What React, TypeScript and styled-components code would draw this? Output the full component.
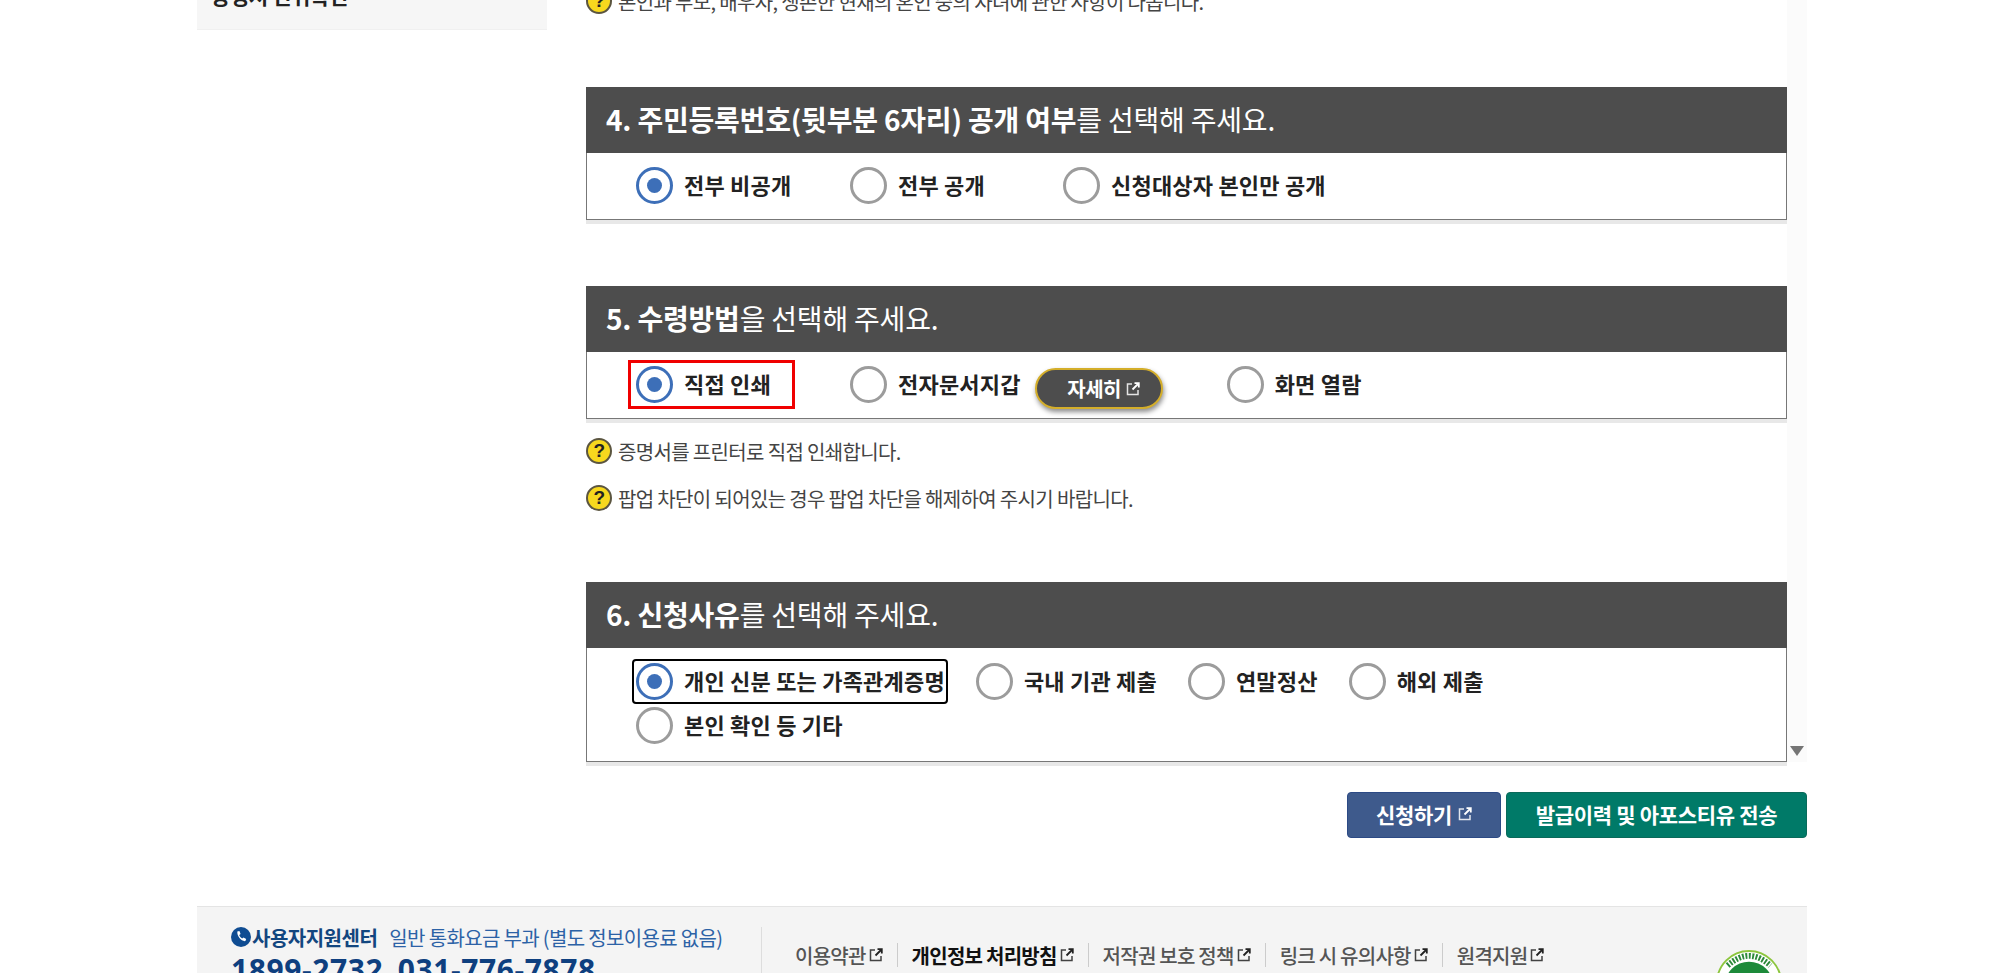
import React from "react";
import styled, { createGlobalStyle } from "styled-components";

const GlobalStyle = createGlobalStyle`
  html, body {
    margin: 0;
    padding: 0;
    height: 973px;
    overflow: hidden;
    background: #fff;
    font-family: "Noto Sans CJK KR", "Noto Sans", sans-serif;
  }
`;

const Page = styled.div`
  width: 1610px;
  margin: -30px 0 0 197px;
`;

const Main = styled.div`
  display: flex;
  gap: 39px;
`;

const Sidebar = styled.aside`
  width: 350px;
  flex: none;
`;

const SideItem = styled.div`
  height: 60px;
  box-sizing: border-box;
  padding: 11px 14px 0;
  background: #f6f6f6;
  border-bottom: 1px solid #f0f0f0;
  font-size: 21px;
  font-weight: 700;
  line-height: 28px;
  letter-spacing: -0.4px;
  color: #222;
`;

const Content = styled.main`
  width: 1221px;
  flex: none;
`;

const ScrollArea = styled.div`
  display: flex;
`;

const Sections = styled.div`
  width: 1201px;
  flex: none;
`;

const Gutter = styled.div`
  width: 20px;
  display: flex;
  align-items: flex-end;
  justify-content: center;
  padding-bottom: 6px;
  box-sizing: border-box;
  background: #fbfbfb;
`;

const ArrowDown = styled.span`
  width: 0;
  height: 0;
  border-left: 7px solid transparent;
  border-right: 7px solid transparent;
  border-top: 10px solid #757575;
`;

const Notes = styled.div<{ $top?: number }>`
  display: flex;
  flex-direction: column;
  gap: 19px;
  padding-top: ${(p) => p.$top ?? 0}px;
`;

const Note = styled.p`
  display: flex;
  align-items: center;
  gap: 6px;
  height: 28px;
  margin: 0;
  font-size: 20px;
  letter-spacing: -0.65px;
  color: #444;
  white-space: nowrap;
`;

const Hint = styled.span`
  width: 26px;
  height: 26px;
  flex: none;
  box-sizing: border-box;
  border-radius: 50%;
  background: #f7d81e;
  border: 2px solid #5b5540;
  display: flex;
  align-items: center;
  justify-content: center;
  font-family: "Liberation Sans", sans-serif;
  font-size: 19px;
  font-weight: 700;
  color: #222;
`;

const Section = styled.section<{ $top: number }>`
  margin-top: ${(p) => p.$top}px;
  box-shadow: 0 4px 0 #e8e8e8;
`;

const Heading = styled.h2`
  height: 66px;
  box-sizing: border-box;
  margin: 0;
  padding: 0 0 3px 20px;
  display: flex;
  align-items: center;
  white-space: pre;
  background: #4d4d4d;
  color: #fff;
  font-size: 28px;
  font-weight: 400;
  letter-spacing: -0.2px;
  strong {
    font-weight: 700;
  }
`;

const Options = styled.div<{ $tall?: boolean }>`
  box-sizing: border-box;
  height: ${(p) => (p.$tall ? 114 : 67)}px;
  padding: ${(p) => (p.$tall ? "12px 0 0 49px" : "11px 0 0 49px")};
  border: 1px solid #777;
  border-top: none;
  display: flex;
  flex-wrap: wrap;
  align-content: flex-start;
  row-gap: 1px;
  background: #fff;
`;

const Option = styled.label<{ $width?: number; $gap?: number }>`
  display: flex;
  align-items: center;
  gap: 11px;
  height: 43px;
  width: ${(p) => (p.$width ? `${p.$width}px` : "auto")};
  margin-right: ${(p) => p.$gap ?? 0}px;
  font-size: 22px;
  font-weight: 700;
  letter-spacing: 0.2px;
  color: #222;
  white-space: nowrap;
`;

const OptionText = styled.span`
  margin-bottom: 3px;
`;

const Radio = styled.span<{ $checked?: boolean }>`
  width: 37px;
  height: 37px;
  flex: none;
  box-sizing: border-box;
  border-radius: 50%;
  border: 3px solid ${(p) => (p.$checked ? "#3d6fb8" : "#9c9c9c")};
  display: flex;
  align-items: center;
  justify-content: center;
  background: #fff;
  &::after {
    content: "";
    display: ${(p) => (p.$checked ? "block" : "none")};
    width: 15px;
    height: 15px;
    border-radius: 50%;
    background: #3d6fb8;
  }
`;

const RedMark = styled.span`
  display: flex;
  align-items: center;
  gap: 11px;
  flex: none;
  height: 49px;
  box-sizing: border-box;
  margin-left: -8px;
  padding: 0 21px 0 5px;
  border: 3px solid #f00000;
`;

const FocusMark = styled.span`
  display: flex;
  align-items: center;
  gap: 11px;
  flex: none;
  height: 45px;
  box-sizing: border-box;
  margin-left: -4px;
  padding: 0 1px 0 2px;
  border: 2px solid #000;
  border-radius: 4px;
`;

const DetailButton = styled.button`
  display: flex;
  align-items: center;
  justify-content: center;
  gap: 5px;
  width: 128px;
  height: 41px;
  margin: 5px 64px 0 14px;
  padding: 0 0 0 10px;
  border: 2px solid #d4ae2a;
  border-radius: 21px;
  background: #4d4d4d;
  box-shadow: 1px 3px 5px rgba(0, 0, 0, 0.45);
  color: #fff;
  font-family: inherit;
  font-size: 20px;
  font-weight: 700;
  letter-spacing: -0.5px;
`;

const Actions = styled.div`
  display: flex;
  justify-content: flex-end;
  gap: 5px;
  margin-top: 30px;
`;

const ActionButton = styled.button<{ $bg: string; $line: string; $width: number }>`
  display: flex;
  align-items: center;
  justify-content: center;
  gap: 6px;
  width: ${(p) => p.$width}px;
  height: 46px;
  padding: 0 0 3px;
  border: 1px solid ${(p) => p.$line};
  border-radius: 4px;
  background: ${(p) => p.$bg};
  color: #fff;
  font-family: inherit;
  font-size: 21px;
  font-weight: 700;
  letter-spacing: -0.3px;
`;

const Footer = styled.footer`
  display: flex;
  height: 200px;
  margin-top: 68px;
  padding: 17px 0 0 34px;
  box-sizing: border-box;
  background: #f4f4f4;
  border-top: 1px solid #e4e4e4;
`;

const Support = styled.div`
  width: 530px;
  flex: none;
`;

const SupportRow = styled.div`
  display: flex;
  align-items: center;
  height: 26px;
  white-space: nowrap;
`;

const SupportTitle = styled.strong`
  margin: 0 12px 0 1px;
  font-size: 20px;
  letter-spacing: -0.5px;
  color: #12467f;
`;

const SupportInfo = styled.span`
  font-size: 20px;
  letter-spacing: -0.65px;
  color: #2c62a6;
`;

const Phones = styled.div`
  margin-top: 1px;
  font-family: "Noto Sans", sans-serif;
  font-size: 30px;
  line-height: 38px;
  font-weight: 700;
  letter-spacing: 0.6px;
  word-spacing: 6px;
  color: #0e3f7f;
`;

const FooterLinks = styled.nav`
  display: flex;
  align-items: flex-start;
  width: 920px;
  flex: none;
  margin-top: 3px;
  padding: 16px 0 0 33px;
  border-left: 1px solid #ddd;
  height: 60px;
  box-sizing: border-box;
`;

const FooterLink = styled.a<{ $strong?: boolean; $last?: boolean }>`
  display: flex;
  align-items: center;
  gap: 3px;
  height: 24px;
  padding-right: 14px;
  margin-right: 14px;
  border-right: ${(p) => (p.$last ? "none" : "1px solid #ccc")};
  font-size: 20px;
  font-weight: ${(p) => (p.$strong ? 700 : 500)};
  letter-spacing: -0.75px;
  color: ${(p) => (p.$strong ? "#111" : "#555")};
  white-space: nowrap;
`;

const Badge = styled.div`
  flex: none;
  margin: 25px 0 0 34px;
`;

const ExternalIcon = ({ color = "#fff", size = 14 }: { color?: string; size?: number }) => (
  <svg width={size} height={size} viewBox="0 0 14 14" fill="none">
    <path d="M6 2H1.5v10.5H12V8" stroke={color} strokeWidth="1.5" opacity="0.85" />
    <path d="M6.5 7.500 12.500 1.500M8.500 1.200h4.300v4.300" stroke={color} strokeWidth="1.8" />
  </svg>
);

const PhoneIcon = () => (
  <svg width="20" height="20" viewBox="0 0 20 20">
    <circle cx="10" cy="10" r="10" fill="#0f4c92" />
    <path
      d="M6.300 4.600 8.400 4l1.200 3-1.400 1c.5 1.500 1.500 2.700 3 3.500l1.300-1.100 2.700 1.600-.8 2.100c-3.900.5-8.500-4.700-8.100-9.500z"
      fill="#fff"
    />
  </svg>
);

const WaBadge = () => (
  <svg width="68" height="68" viewBox="0 0 70 70">
    <circle cx="35" cy="35" r="33" fill="#fff" stroke="#8dc63f" strokeWidth="2" />
    <path d="M13 17 Q35 -3 57 17" fill="none" stroke="#2d8a3a" strokeWidth="6" strokeDasharray="2 1.500" />
    <circle cx="35" cy="38" r="25" fill="#1d8a3a" />
    <text x="10" y="47" fontFamily="Liberation Sans" fontSize="25" fontWeight="700" fontStyle="italic" fill="#fff">
      WA
    </text>
    <circle cx="49" cy="37" r="10" fill="#e8f2c8" />
  </svg>
);

type Item = { label: string; checked?: boolean; width?: number; gap?: number };

const Choice = ({ label, checked, width, gap }: Item) => (
  <Option $width={width} $gap={gap}>
    <Radio $checked={checked} />
    <OptionText>{label}</OptionText>
  </Option>
);

export default function App() {
  return (
    <Page>
      <GlobalStyle />
      <Main>
        <Sidebar>
          <SideItem>증명서 진위확인</SideItem>
        </Sidebar>
        <Content>
          <ScrollArea>
            <Sections>
              <Notes $top={17}>
                <Note>
                  <Hint>?</Hint>본인과 부모, 배우자, 생존한 현재의 혼인 중의 자녀에 관한 사항이 나옵니다.
                </Note>
              </Notes>
              <Section $top={72}>
                <Heading>
                  <strong>4. 주민등록번호(뒷부분 6자리) 공개 여부</strong>를 선택해 주세요.
                </Heading>
                <Options>
                  <Choice label="전부 비공개" checked width={214} />
                  <Choice label="전부 공개" width={213} />
                  <Choice label="신청대상자 본인만 공개" />
                </Options>
              </Section>
              <Section $top={66}>
                <Heading>
                  <strong>5. 수령방법</strong>을 선택해 주세요.
                </Heading>
                <Options>
                  <Option $width={214}>
                    <RedMark>
                      <Radio $checked />
                      <OptionText>직접 인쇄</OptionText>
                    </RedMark>
                  </Option>
                  <Choice label="전자문서지갑" />
                  <DetailButton>
                    자세히
                    <ExternalIcon />
                  </DetailButton>
                  <Choice label="화면 열람" />
                </Options>
              </Section>
              <Notes $top={18}>
                <Note>
                  <Hint>?</Hint>증명서를 프린터로 직접 인쇄합니다.
                </Note>
                <Note>
                  <Hint>?</Hint>팝업 차단이 되어있는 경우 팝업 차단을 해제하여 주시기 바랍니다.
                </Note>
              </Notes>
              <Section $top={70}>
                <Heading>
                  <strong>6. 신청사유</strong>를 선택해 주세요.
                </Heading>
                <Options $tall>
                  <Option $gap={28}>
                    <FocusMark>
                      <Radio $checked />
                      <OptionText>개인 신분 또는 가족관계증명</OptionText>
                    </FocusMark>
                  </Option>
                  <Choice label="국내 기관 제출" gap={31} />
                  <Choice label="연말정산" gap={31} />
                  <Choice label="해외 제출" gap={200} />
                  <Choice label="본인 확인 등 기타" />
                </Options>
              </Section>
            </Sections>
            <Gutter>
              <ArrowDown />
            </Gutter>
          </ScrollArea>
          <Actions>
            <ActionButton $bg="#3e5a8c" $line="#2c4a85" $width={154}>
              신청하기
              <ExternalIcon />
            </ActionButton>
            <ActionButton $bg="#007a68" $line="#0a6a5a" $width={301}>
              발급이력 및 아포스티유 전송
            </ActionButton>
          </Actions>
        </Content>
      </Main>
      <Footer>
        <Support>
          <SupportRow>
            <PhoneIcon />
            <SupportTitle>사용자지원센터</SupportTitle>
            <SupportInfo>일반 통화요금 부과 (별도 정보이용료 없음)</SupportInfo>
          </SupportRow>
          <Phones>1899-2732 031-776-7878</Phones>
        </Support>
        <FooterLinks>
          <FooterLink>
            이용약관
            <ExternalIcon color="#222" />
          </FooterLink>
          <FooterLink $strong>
            개인정보 처리방침
            <ExternalIcon color="#222" />
          </FooterLink>
          <FooterLink>
            저작권 보호 정책
            <ExternalIcon color="#222" />
          </FooterLink>
          <FooterLink>
            링크 시 유의사항
            <ExternalIcon color="#222" />
          </FooterLink>
          <FooterLink $last>
            원격지원
            <ExternalIcon color="#222" />
          </FooterLink>
        </FooterLinks>
        <Badge>
          <WaBadge />
        </Badge>
      </Footer>
    </Page>
  );
}
